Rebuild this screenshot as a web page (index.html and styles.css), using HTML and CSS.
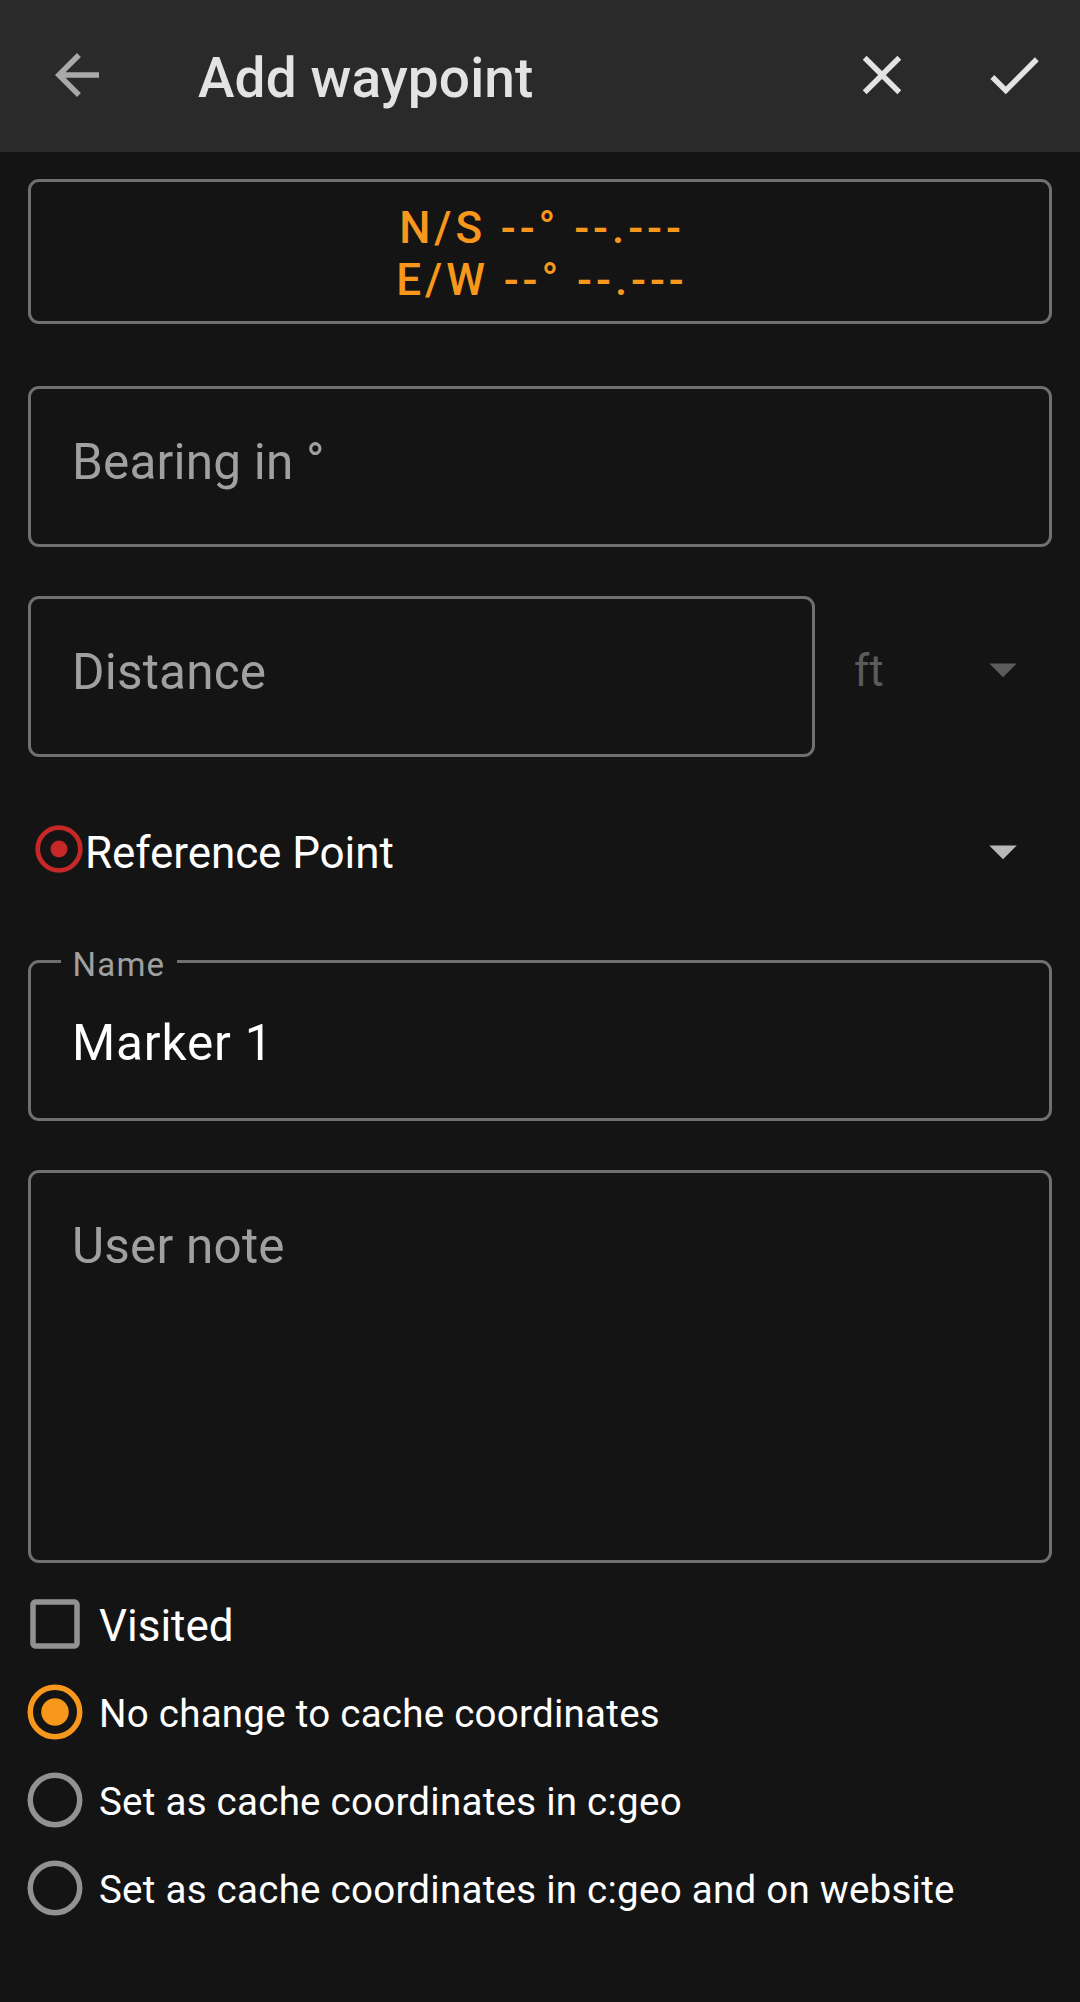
FILE: index.html
```html
<!DOCTYPE html>
<html lang="en">
<head>
<meta charset="utf-8">
<title>Add waypoint</title>
<link rel="stylesheet" href="styles.css">
</head>
<body>
<header class="toolbar">
  <svg class="icon icon-back" viewBox="0 0 24 24"><path d="M20 11H7.83l5.59-5.59L12 4l-8 8 8 8 1.41-1.41L7.83 13H20v-2z"/></svg>
  <h1 class="title">Add waypoint</h1>
  <svg class="icon" viewBox="0 0 24 24"><path d="M19 6.41L17.59 5 12 10.59 6.41 5 5 6.41 10.59 12 5 17.59 6.41 19 12 13.41 17.59 19 19 17.59 13.41 12z"/></svg>
  <svg class="icon" viewBox="0 0 24 24"><path d="M9 16.17L4.83 12l-1.42 1.41L9 19 21 7l-1.41-1.41z"/></svg>
</header>
<main class="form">
  <div class="coords"><span>N/S --° --.---</span><span>E/W --° --.---</span></div>
  <div class="field"><span class="hint bearing">Bearing in °</span></div>
  <div class="distance-row">
    <div class="field field-distance"><span class="hint">Distance</span></div>
    <div class="unit">
      <span class="unit-text">ft</span>
      <svg class="icon arrow" viewBox="0 0 24 24"><path d="M7 10l5 5 5-5z"/></svg>
    </div>
  </div>
  <div class="reference">
    <svg class="target" viewBox="0 0 48 48"><circle class="target-ring" cx="24" cy="24" r="21.3"/><circle class="target-dot" cx="24" cy="24" r="8.5"/></svg>
    <span class="reference-text">Reference Point</span>
    <svg class="icon arrow" viewBox="0 0 24 24"><path d="M7 10l5 5 5-5z"/></svg>
  </div>
  <div class="field field-name"><span class="label">Name</span><span class="value">Marker 1</span></div>
  <div class="field field-note"><span class="hint">User note</span></div>
  <div class="option option-check">
    <svg class="icon" viewBox="0 0 24 24"><path d="M19 5v14H5V5h14m0-2H5c-1.1 0-2 .9-2 2v14c0 1.1.9 2 2 2h14c1.1 0 2-.9 2-2V5c0-1.1-.9-2-2-2z"/></svg>
    <span>Visited</span>
  </div>
  <div class="option selected">
    <svg class="icon" viewBox="0 0 24 24"><circle class="ring" cx="12" cy="12" r="9"/><circle cx="12" cy="12" r="5"/></svg>
    <span>No change to cache coordinates</span>
  </div>
  <div class="option">
    <svg class="icon" viewBox="0 0 24 24"><circle class="ring" cx="12" cy="12" r="9"/></svg>
    <span>Set as cache coordinates in c:geo</span>
  </div>
  <div class="option">
    <svg class="icon" viewBox="0 0 24 24"><circle class="ring" cx="12" cy="12" r="9"/></svg>
    <span>Set as cache coordinates in c:geo and on website</span>
  </div>
</main>
</body>
</html>
```

FILE: styles.css
```css
* { box-sizing: border-box; }

body {
  margin: 0;
  min-height: 2002px;
  background: #141414;
  color: #fff;
  font-family: Roboto, "Liberation Sans", sans-serif;
}

.icon {
  display: block;
  flex: none;
  width: 66px;
  height: 66px;
  fill: currentColor;
}

.toolbar {
  display: flex;
  align-items: center;
  gap: 66px;
  height: 152px;
  padding: 0 33px 2px 44px;
  background: #2a2a2a;
  color: #e3e3e3;
}

.icon-back { color: #a9a9a9; }

.title {
  flex: 1;
  margin: 0;
  padding: 6px 0 0 22px;
  font-size: 55px;
  font-weight: 500;
  line-height: 64px;
  letter-spacing: .1px;
}

.form {
  display: flex;
  flex-direction: column;
  padding: 27px 28px 0;
}

.coords {
  display: flex;
  flex-direction: column;
  align-items: center;
  height: 145px;
  padding: 20px 0 0 4px;
  border: 3px solid #707070;
  border-radius: 11px;
  color: #f7981d;
  font-size: 44px;
  font-weight: 500;
  line-height: 52px;
  letter-spacing: 3.93px;
}

.field {
  height: 161px;
  margin-top: 62px;
  padding: 44px 41px 0;
  border: 3px solid #707070;
  border-radius: 11px;
  font-size: 49.5px;
  line-height: 58px;
  letter-spacing: .2px;
}

.hint { color: #a0a0a0; }
.value { letter-spacing: .85px; }

.distance-row {
  display: flex;
  margin-top: 49px;
}

.field-distance { width: 787px; margin: 0; }

.unit {
  display: flex;
  flex: 1;
  align-items: center;
  justify-content: space-between;
  padding: 0 16px 15px 39px;
  color: #5b5b5b;
}

.unit-text {
  padding-top: 4px;
  font-size: 44px;
}

.reference {
  display: flex;
  align-items: center;
  height: 66px;
  margin-top: 61px;
  padding: 0 16px 0 6.5px;
}

.target { width: 48px; height: 48px; margin-bottom: 4px; }
.target-ring { fill: none; stroke: #c62828; stroke-width: 4.7; }
.target-dot { fill: #c62828; }

.reference-text {
  flex: 1;
  padding-top: 4px;
  padding-left: 2.5px;
  font-size: 44px;
  letter-spacing: -.08px;
}

.arrow { color: #b8b8b8; }
.unit .arrow { color: #5b5b5b; }

.field-name {
  position: relative;
  margin-top: 76px;
  padding-top: 51px;
}

.label {
  position: absolute;
  top: -18px;
  left: 30px;
  padding: 0 12px 0 11.5px;
  background: #141414;
  color: #a0a0a0;
  font-size: 33px;
  line-height: 39px;
  letter-spacing: 1.2px;
}

.field-note { height: 393px; margin-top: 49px; }

.option {
  display: flex;
  align-items: center;
  gap: 6px;
  height: 88px;
  font-size: 38.5px;
  letter-spacing: .26px;
}

.option .icon { margin-left: -6px; color: #929292; }
.option span { padding: 3px 0 0 5px; }
.option-check { margin-top: 17px; font-size: 44px; letter-spacing: 0; }
.option.selected .icon { color: #f7981d; }
.ring { fill: none; stroke: currentColor; stroke-width: 2; }
```
